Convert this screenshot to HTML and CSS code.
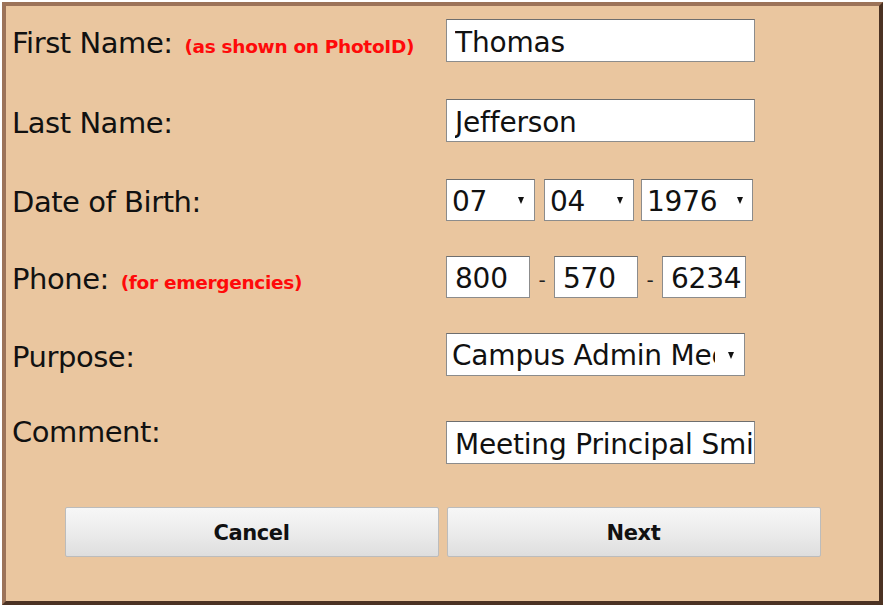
FILE: index.html
```html
<!DOCTYPE html>
<html>
<head>
<meta charset="utf-8">
<link rel="stylesheet" href="styles.css">
</head>
<body>
<div class="frame">
  <div class="form">
    <div class="row r1">
      <div class="label">First Name: <span class="hint hint1">(as shown on PhotoID)</span></div>
      <input class="text wide" type="text" value="Thomas">
    </div>
    <div class="row r2">
      <div class="label">Last Name:</div>
      <input class="text wide" type="text" value="Jefferson">
    </div>
    <div class="row r3">
      <div class="label">Date of Birth:</div>
      <div class="controls">
        <div class="sel s-mm"><select><option>07</option></select></div>
        <div class="sel s-dd"><select><option>04</option></select></div>
        <div class="sel s-yy"><select><option>1976</option></select></div>
      </div>
    </div>
    <div class="row r4">
      <div class="label">Phone: <span class="hint hint2">(for emergencies)</span></div>
      <div class="controls">
        <input class="text phone" type="text" value="800">
        <span class="dash">-</span>
        <input class="text phone" type="text" value="570">
        <span class="dash">-</span>
        <input class="text phone" type="text" value="6234">
      </div>
    </div>
    <div class="row r5">
      <div class="label">Purpose:</div>
      <div class="sel s-purpose"><select><option>Campus Admin Meeting</option></select></div>
    </div>
    <div class="row r6">
      <div class="label label-top">Comment:</div>
      <input class="text wide comment" type="text" value="Meeting Principal Smith">
    </div>
    <div class="buttons">
      <button class="btn">Cancel</button>
      <button class="btn">Next</button>
    </div>
  </div>
</div>
</body>
</html>
```
FILE: styles.css
```css
html, body {
  margin: 0;
  padding: 0;
  background: #ffffff;
}
body {
  font-family: "DejaVu Sans", Verdana, sans-serif;
}
.frame {
  margin: 2px;
  width: 881px;
  height: 603px;
  box-sizing: border-box;
  border-style: solid;
  border-width: 4px;
  border-color: #9c7359 #4b3223 #4b3223 #9c7359;
  background: #eac69f;
}
.form {
  padding: 13px 6px 0 6px;
  display: flex;
  flex-direction: column;
}
.row {
  display: flex;
  align-items: center;
  height: 43px;
}
.r1 { margin-bottom: 37px; }
.r2 { margin-bottom: 37px; }
.r3 { height: 42px; margin-bottom: 35px; }
.r4 { height: 42px; margin-bottom: 35px; }
.r5 { margin-bottom: 45px; }
.r6 { margin-bottom: 43px; align-items: flex-start; }
.label {
  width: 434px;
  flex: none;
  font-size: 29px;
  color: #111;
  white-space: nowrap;
  letter-spacing: -0.45px;
  position: relative;
  top: 2px;
}
.label-top {
  margin-top: -8px;
}
.hint {
  color: #ff0a0a;
  font-weight: bold;
  font-size: 18.5px;
  letter-spacing: -0.3px;
  margin-left: 3px;
  position: relative;
  top: 0px;
}
.text {
  box-sizing: border-box;
  height: 43px;
  border: 1px solid #8c8c8c;
  border-top-color: #6e6e6e;
  background: #fff;
  font-family: "DejaVu Sans", Verdana, sans-serif;
  font-size: 28px;
  letter-spacing: -0.2px;
  color: #111;
  padding: 3px 0 0 8px;
  margin: 0;
  outline: none;
}
.wide { width: 309px; }
.phone {
  width: 84px;
  height: 42px;
}
.controls {
  display: flex;
  align-items: center;
}
.dash {
  width: 24px;
  text-align: center;
  font-size: 20px;
  color: #222;
  position: relative;
  top: 3px;
}
.sel {
  position: relative;
  height: 42px;
}
.sel select {
  appearance: none;
  -webkit-appearance: none;
  box-sizing: border-box;
  height: 100%;
  width: 100%;
  border: 1px solid #8c8c8c;
  border-top-color: #6e6e6e;
  background: #fff;
  border-radius: 0;
  font-family: "DejaVu Sans", Verdana, sans-serif;
  font-size: 28px;
  letter-spacing: -0.2px;
  color: #111;
  padding: 2px 24px 0 5px;
  margin: 0;
  outline: none;
}
.sel::after {
  content: "";
  position: absolute;
  top: 50%;
  margin-top: -3px;
  right: 11px;
  width: 0;
  height: 0;
  border-left: 3.5px solid transparent;
  border-right: 3.5px solid transparent;
  border-top: 7px solid #111;
  pointer-events: none;
}
.s-mm { width: 89px; margin-right: 9px; }
.s-dd { width: 90px; margin-right: 7px; }
.s-yy { width: 112px; }
.s-yy::after { right: 10px; }
.s-purpose { width: 299px; height: 43px; }
.s-purpose select { padding-right: 29px; }
.buttons {
  display: flex;
  justify-content: center;
  gap: 8px;
}
.btn {
  width: 374px;
  height: 50px;
  box-sizing: border-box;
  border: 1px solid #bcbcbc;
  border-radius: 2px;
  background: linear-gradient(to bottom, #f7f7f7 0%, #ececec 50%, #dedede 100%);
  font-family: "DejaVu Sans", Verdana, sans-serif;
  font-weight: bold;
  font-size: 21px;
  letter-spacing: -0.4px;
  color: #111;
  padding: 2px 0 0 0;
  margin: 0;
}
```
